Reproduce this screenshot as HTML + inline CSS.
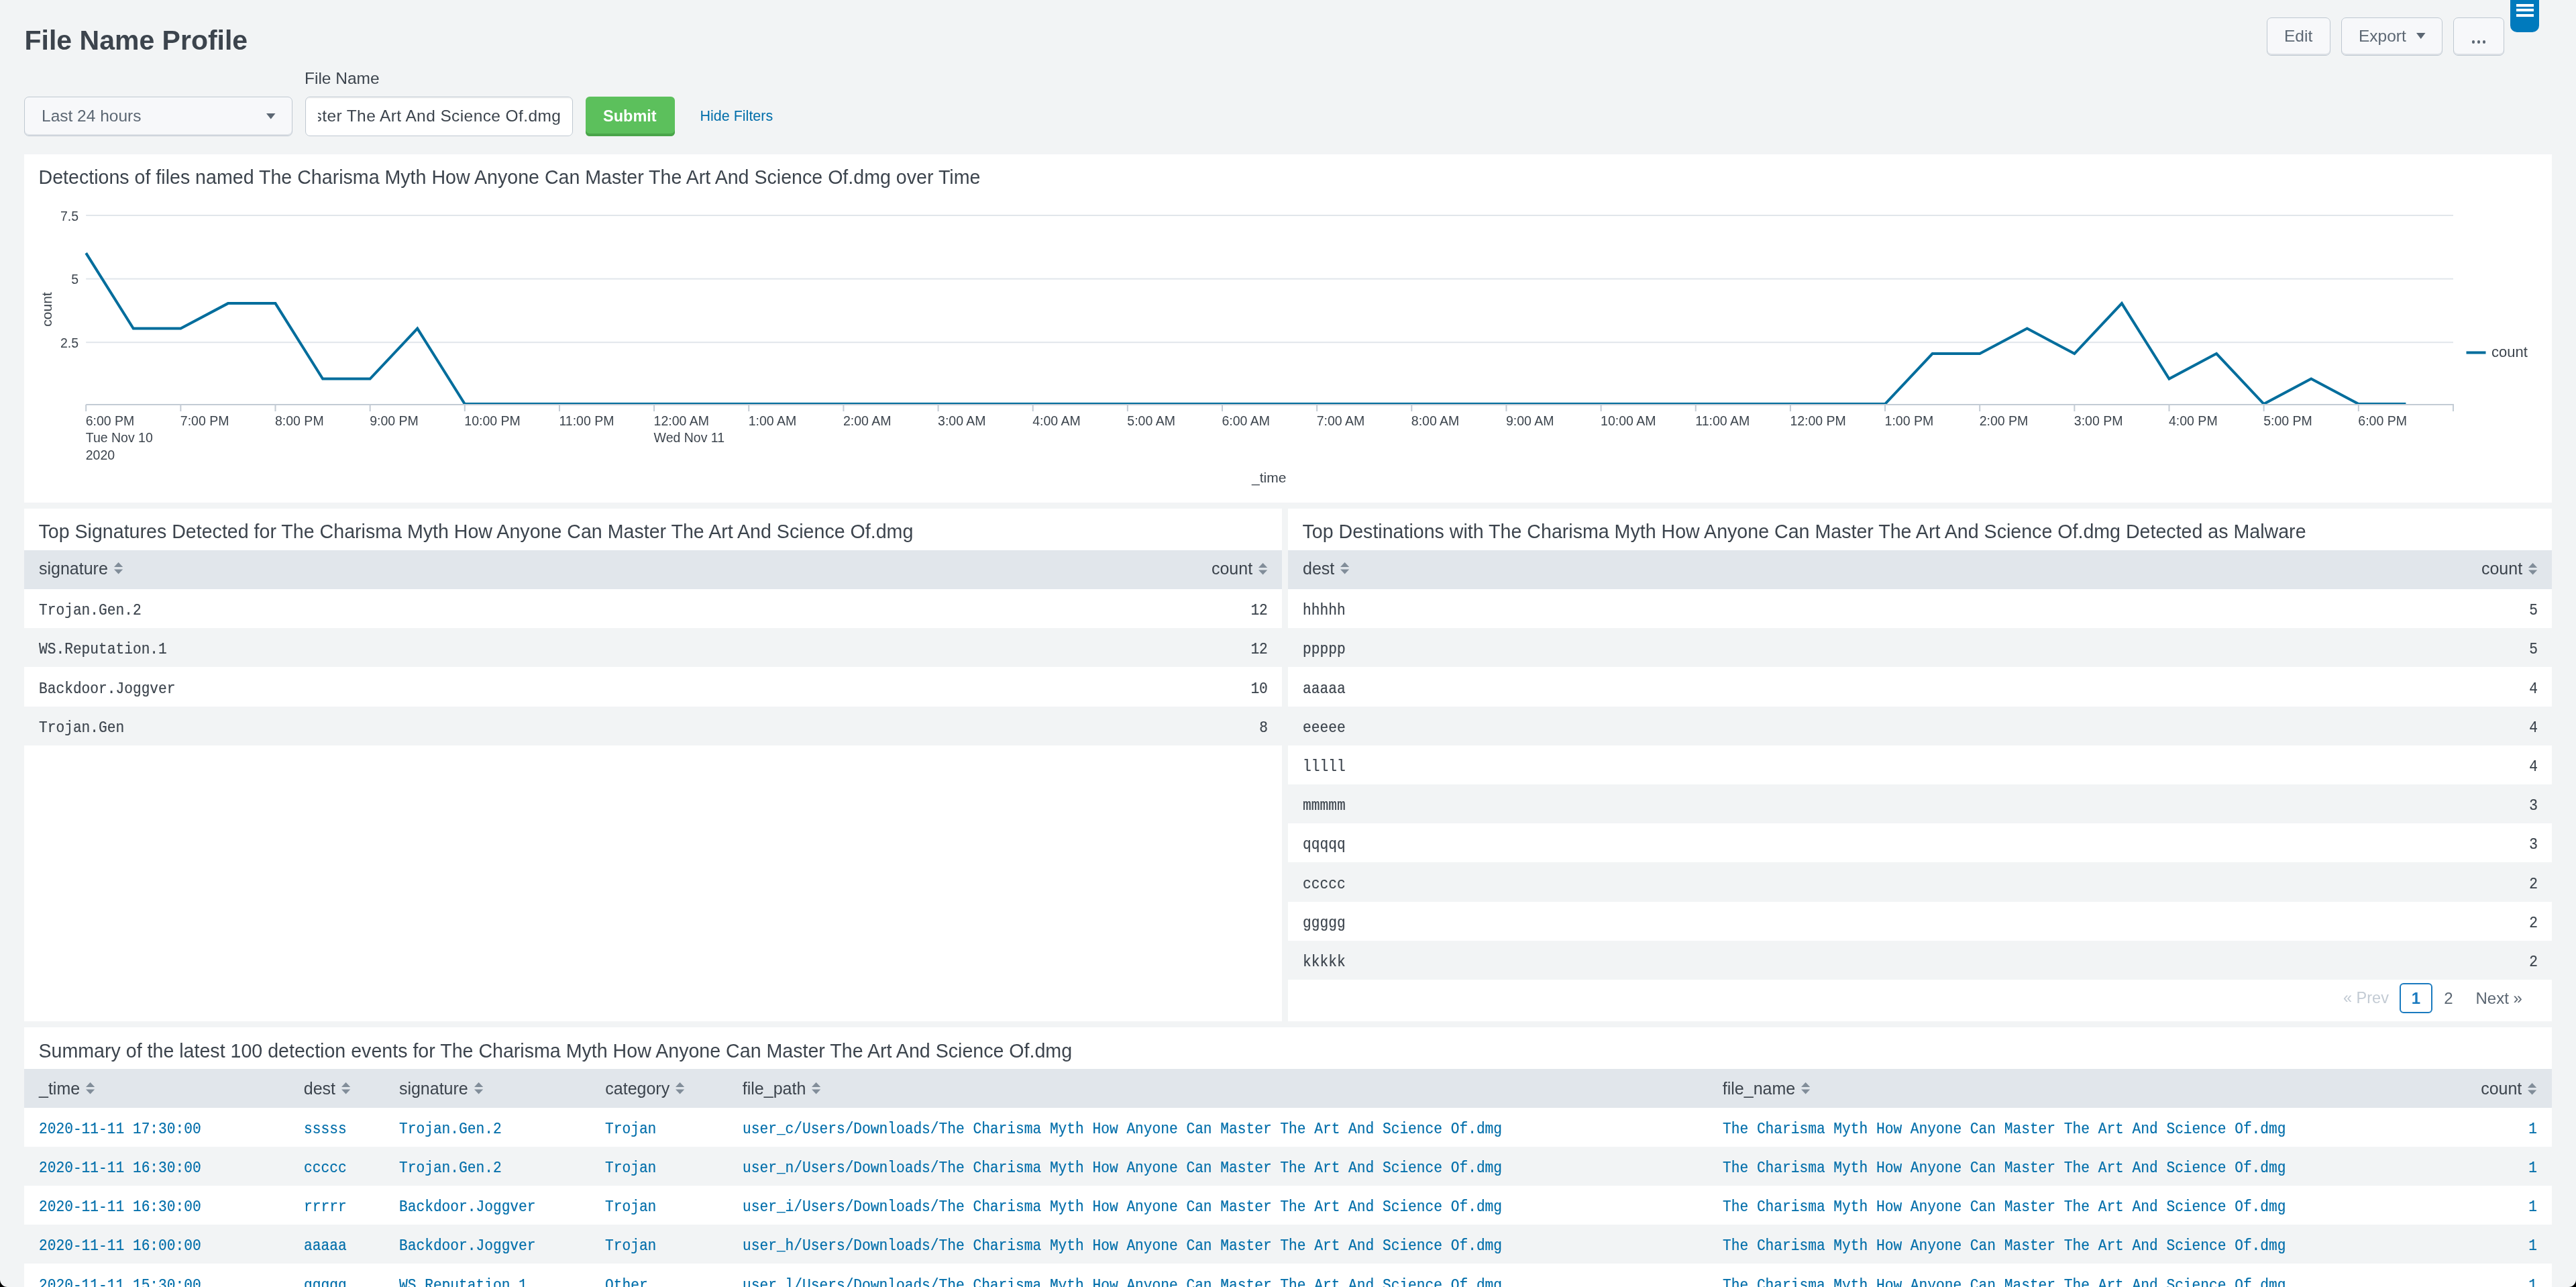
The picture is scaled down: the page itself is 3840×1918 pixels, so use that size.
<!DOCTYPE html><html><head><meta charset="utf-8"><title>File Name Profile</title><style>
html,body{margin:0;padding:0;}
body{width:3840px;height:1918px;overflow:hidden;position:relative;background:#f2f4f5;font-family:"Liberation Sans",sans-serif;}
#wrap{position:absolute;left:0;top:0;width:3840px;height:1918px;will-change:transform;}
.t{position:absolute;white-space:pre;line-height:1;}
.r{position:absolute;}
.btn{position:absolute;box-sizing:border-box;background:#f7f8fa;border:1px solid #bfc8d1;border-radius:7px;box-shadow:inset 0 -2px 0 #dde1e6;}
.dd{position:absolute;box-sizing:border-box;background:#f7f8fa;border:1px solid #bfc8d1;border-radius:7px;box-shadow:inset 0 -2px 0 #dde1e6;}
.inp{position:absolute;box-sizing:border-box;background:#ffffff;border:1px solid #bfc8d1;border-radius:7px;box-shadow:inset 0 2px 1px rgba(0,0,0,0.04);}
</style></head><body><div id="wrap"><div class="t" style="left:36.50px;top:40.49px;font-size:41px;color:#3c444d;font-weight:700;font-family:'Liberation Sans', sans-serif;">File Name Profile</div>
<div class="btn" style="left:3379px;top:26px;width:95px;height:56.5px"></div>
<div class="t" style="left:3405.00px;top:41.86px;font-size:24.5px;color:#5c6773;font-weight:400;font-family:'Liberation Sans', sans-serif;">Edit</div>
<div class="btn" style="left:3490px;top:26px;width:151px;height:56.5px"></div>
<div class="t" style="left:3516.00px;top:41.86px;font-size:24.5px;color:#5c6773;font-weight:400;font-family:'Liberation Sans', sans-serif;">Export</div>
<svg class="r" style="left:3602px;top:49px" width="14" height="10" viewBox="0 0 14 10"><path d="M0 0 L13.5 0 L6.75 9 Z" fill="#5c6773"/></svg>
<div class="btn" style="left:3657px;top:26px;width:76px;height:56.5px"></div>
<div class="r" style="left:3684.8px;top:60.199999999999996px;width:4.4px;height:4.4px;border-radius:50%;background:#5c6773"></div>
<div class="r" style="left:3692.8px;top:60.199999999999996px;width:4.4px;height:4.4px;border-radius:50%;background:#5c6773"></div>
<div class="r" style="left:3700.8px;top:60.199999999999996px;width:4.4px;height:4.4px;border-radius:50%;background:#5c6773"></div>
<div class="r" style="left:3742px;top:-10px;width:43px;height:58px;background:#007abd;border-radius:0 0 10px 10px"></div>
<div class="r" style="left:3750.70px;top:6.10px;width:26.50px;height:3.80px;background:#ffffff;"></div>
<div class="r" style="left:3750.70px;top:13.30px;width:26.50px;height:3.80px;background:#ffffff;"></div>
<div class="r" style="left:3750.70px;top:21.00px;width:26.50px;height:3.80px;background:#ffffff;"></div>
<div class="t" style="left:454.00px;top:104.56px;font-size:24.5px;color:#3c444d;font-weight:400;font-family:'Liberation Sans', sans-serif;">File Name</div>
<div class="dd" style="left:36.3px;top:144.3px;width:400.2px;height:58.5px"></div>
<div class="t" style="left:62.00px;top:161.06px;font-size:24.5px;color:#5c6773;font-weight:400;font-family:'Liberation Sans', sans-serif;">Last 24 hours</div>
<svg class="r" style="left:396.5px;top:169px" width="14" height="9" viewBox="0 0 14 9"><path d="M0 0 L13.5 0 L6.75 8.5 Z" fill="#5c6773"/></svg>
<div class="inp" style="left:455.2px;top:144.3px;width:399.3px;height:58.3px"></div>
<div class="r" style="left:473.9px;top:150px;width:362px;height:46px;overflow:hidden"><div class="t" style="right:-0.4px;letter-spacing:0.4px;top:10.66px;font-size:24.5px;color:#3c444d;font-family:'Liberation Sans', sans-serif">The Charisma Myth How Anyone Can Master The Art And Science Of.dmg</div></div>
<div class="r" style="left:873.2px;top:144px;width:133.3px;height:58.6px;background:#5cc05c;border-radius:6px;box-shadow:inset 0 -4px 0 #4aa54a"></div>
<div class="t" style="left:899.00px;top:161.51px;font-size:23.5px;color:#ffffff;font-weight:700;font-family:'Liberation Sans', sans-serif;">Submit</div>
<div class="t" style="left:1043.50px;top:162.60px;font-size:21.5px;color:#006eaa;font-weight:400;font-family:'Liberation Sans', sans-serif;">Hide Filters</div>
<div class="r" style="left:36.00px;top:230.00px;width:3768.00px;height:518.60px;background:#ffffff;"></div>
<div class="t" style="left:57.50px;top:250.29px;font-size:28.6px;color:#3c444d;font-weight:400;font-family:'Liberation Sans', sans-serif;">Detections of files named The Charisma Myth How Anyone Can Master The Art And Science Of.dmg over Time</div>
<svg class="r" style="left:0;top:0" width="3840" height="760" viewBox="0 0 3840 760"><defs><clipPath id="pc"><rect x="128" y="200" width="3530" height="402.2"/></clipPath></defs><rect x="128.2" y="320.00" width="3528.80" height="2" fill="#e1e6eb"/><rect x="128.2" y="414.60" width="3528.80" height="2" fill="#e1e6eb"/><rect x="128.2" y="509.20" width="3528.80" height="2" fill="#e1e6eb"/><polyline points="128.20,377.18 198.77,489.59 269.35,489.59 339.93,452.12 410.50,452.12 481.07,564.53 551.65,564.53 622.23,489.59 692.80,602.00 763.38,602.00 833.95,602.00 904.53,602.00 975.10,602.00 1045.67,602.00 1116.25,602.00 1186.83,602.00 1257.40,602.00 1327.98,602.00 1398.55,602.00 1469.12,602.00 1539.70,602.00 1610.28,602.00 1680.85,602.00 1751.43,602.00 1822.00,602.00 1892.58,602.00 1963.15,602.00 2033.73,602.00 2104.30,602.00 2174.88,602.00 2245.45,602.00 2316.03,602.00 2386.60,602.00 2457.17,602.00 2527.75,602.00 2598.32,602.00 2668.90,602.00 2739.47,602.00 2810.05,602.00 2880.62,527.06 2951.20,527.06 3021.78,489.59 3092.35,527.06 3162.92,452.12 3233.50,564.53 3304.07,527.06 3374.65,602.00 3445.22,564.53 3515.80,602.00 3586.38,602.00" fill="none" stroke="#006d9c" stroke-width="4" stroke-linejoin="miter"/><rect x="128.2" y="602" width="3529.80" height="2" fill="#c3cbd4"/><rect x="127.20" y="603" width="2" height="10" fill="#c3cbd4"/><rect x="268.35" y="603" width="2" height="10" fill="#c3cbd4"/><rect x="409.50" y="603" width="2" height="10" fill="#c3cbd4"/><rect x="550.65" y="603" width="2" height="10" fill="#c3cbd4"/><rect x="691.80" y="603" width="2" height="10" fill="#c3cbd4"/><rect x="832.95" y="603" width="2" height="10" fill="#c3cbd4"/><rect x="974.10" y="603" width="2" height="10" fill="#c3cbd4"/><rect x="1115.25" y="603" width="2" height="10" fill="#c3cbd4"/><rect x="1256.40" y="603" width="2" height="10" fill="#c3cbd4"/><rect x="1397.55" y="603" width="2" height="10" fill="#c3cbd4"/><rect x="1538.70" y="603" width="2" height="10" fill="#c3cbd4"/><rect x="1679.85" y="603" width="2" height="10" fill="#c3cbd4"/><rect x="1821.00" y="603" width="2" height="10" fill="#c3cbd4"/><rect x="1962.15" y="603" width="2" height="10" fill="#c3cbd4"/><rect x="2103.30" y="603" width="2" height="10" fill="#c3cbd4"/><rect x="2244.45" y="603" width="2" height="10" fill="#c3cbd4"/><rect x="2385.60" y="603" width="2" height="10" fill="#c3cbd4"/><rect x="2526.75" y="603" width="2" height="10" fill="#c3cbd4"/><rect x="2667.90" y="603" width="2" height="10" fill="#c3cbd4"/><rect x="2809.05" y="603" width="2" height="10" fill="#c3cbd4"/><rect x="2950.20" y="603" width="2" height="10" fill="#c3cbd4"/><rect x="3091.35" y="603" width="2" height="10" fill="#c3cbd4"/><rect x="3232.50" y="603" width="2" height="10" fill="#c3cbd4"/><rect x="3373.65" y="603" width="2" height="10" fill="#c3cbd4"/><rect x="3514.80" y="603" width="2" height="10" fill="#c3cbd4"/><rect x="3655.95" y="603" width="2" height="10" fill="#c3cbd4"/><rect x="3676.5" y="523.5" width="29" height="4" fill="#006d9c"/></svg>
<div class="t" style="right:3723.00px;top:312.89px;font-size:19.5px;color:#3c444d;font-weight:400;font-family:'Liberation Sans', sans-serif;">7.5</div>
<div class="t" style="right:3723.00px;top:407.49px;font-size:19.5px;color:#3c444d;font-weight:400;font-family:'Liberation Sans', sans-serif;">5</div>
<div class="t" style="right:3723.00px;top:502.09px;font-size:19.5px;color:#3c444d;font-weight:400;font-family:'Liberation Sans', sans-serif;">2.5</div>
<div class="t" style="left:68.5px;top:461px;font-size:21px;color:#3c444d;font-family:&quot;Liberation Sans&quot;,sans-serif;transform:translate(-50%,-50%) rotate(-90deg)">count</div>
<div class="t" style="left:127.70px;top:618.49px;font-size:19.5px;color:#3c444d;font-weight:400;font-family:'Liberation Sans', sans-serif;">6:00 PM</div>
<div class="t" style="left:268.85px;top:618.49px;font-size:19.5px;color:#3c444d;font-weight:400;font-family:'Liberation Sans', sans-serif;">7:00 PM</div>
<div class="t" style="left:410.00px;top:618.49px;font-size:19.5px;color:#3c444d;font-weight:400;font-family:'Liberation Sans', sans-serif;">8:00 PM</div>
<div class="t" style="left:551.15px;top:618.49px;font-size:19.5px;color:#3c444d;font-weight:400;font-family:'Liberation Sans', sans-serif;">9:00 PM</div>
<div class="t" style="left:692.30px;top:618.49px;font-size:19.5px;color:#3c444d;font-weight:400;font-family:'Liberation Sans', sans-serif;">10:00 PM</div>
<div class="t" style="left:833.45px;top:618.49px;font-size:19.5px;color:#3c444d;font-weight:400;font-family:'Liberation Sans', sans-serif;">11:00 PM</div>
<div class="t" style="left:974.60px;top:618.49px;font-size:19.5px;color:#3c444d;font-weight:400;font-family:'Liberation Sans', sans-serif;">12:00 AM</div>
<div class="t" style="left:1115.75px;top:618.49px;font-size:19.5px;color:#3c444d;font-weight:400;font-family:'Liberation Sans', sans-serif;">1:00 AM</div>
<div class="t" style="left:1256.90px;top:618.49px;font-size:19.5px;color:#3c444d;font-weight:400;font-family:'Liberation Sans', sans-serif;">2:00 AM</div>
<div class="t" style="left:1398.05px;top:618.49px;font-size:19.5px;color:#3c444d;font-weight:400;font-family:'Liberation Sans', sans-serif;">3:00 AM</div>
<div class="t" style="left:1539.20px;top:618.49px;font-size:19.5px;color:#3c444d;font-weight:400;font-family:'Liberation Sans', sans-serif;">4:00 AM</div>
<div class="t" style="left:1680.35px;top:618.49px;font-size:19.5px;color:#3c444d;font-weight:400;font-family:'Liberation Sans', sans-serif;">5:00 AM</div>
<div class="t" style="left:1821.50px;top:618.49px;font-size:19.5px;color:#3c444d;font-weight:400;font-family:'Liberation Sans', sans-serif;">6:00 AM</div>
<div class="t" style="left:1962.65px;top:618.49px;font-size:19.5px;color:#3c444d;font-weight:400;font-family:'Liberation Sans', sans-serif;">7:00 AM</div>
<div class="t" style="left:2103.80px;top:618.49px;font-size:19.5px;color:#3c444d;font-weight:400;font-family:'Liberation Sans', sans-serif;">8:00 AM</div>
<div class="t" style="left:2244.95px;top:618.49px;font-size:19.5px;color:#3c444d;font-weight:400;font-family:'Liberation Sans', sans-serif;">9:00 AM</div>
<div class="t" style="left:2386.10px;top:618.49px;font-size:19.5px;color:#3c444d;font-weight:400;font-family:'Liberation Sans', sans-serif;">10:00 AM</div>
<div class="t" style="left:2527.25px;top:618.49px;font-size:19.5px;color:#3c444d;font-weight:400;font-family:'Liberation Sans', sans-serif;">11:00 AM</div>
<div class="t" style="left:2668.40px;top:618.49px;font-size:19.5px;color:#3c444d;font-weight:400;font-family:'Liberation Sans', sans-serif;">12:00 PM</div>
<div class="t" style="left:2809.55px;top:618.49px;font-size:19.5px;color:#3c444d;font-weight:400;font-family:'Liberation Sans', sans-serif;">1:00 PM</div>
<div class="t" style="left:2950.70px;top:618.49px;font-size:19.5px;color:#3c444d;font-weight:400;font-family:'Liberation Sans', sans-serif;">2:00 PM</div>
<div class="t" style="left:3091.85px;top:618.49px;font-size:19.5px;color:#3c444d;font-weight:400;font-family:'Liberation Sans', sans-serif;">3:00 PM</div>
<div class="t" style="left:3233.00px;top:618.49px;font-size:19.5px;color:#3c444d;font-weight:400;font-family:'Liberation Sans', sans-serif;">4:00 PM</div>
<div class="t" style="left:3374.15px;top:618.49px;font-size:19.5px;color:#3c444d;font-weight:400;font-family:'Liberation Sans', sans-serif;">5:00 PM</div>
<div class="t" style="left:3515.30px;top:618.49px;font-size:19.5px;color:#3c444d;font-weight:400;font-family:'Liberation Sans', sans-serif;">6:00 PM</div>
<div class="t" style="left:127.70px;top:643.49px;font-size:19.5px;color:#3c444d;font-weight:400;font-family:'Liberation Sans', sans-serif;">Tue Nov 10</div>
<div class="t" style="left:127.70px;top:668.99px;font-size:19.5px;color:#3c444d;font-weight:400;font-family:'Liberation Sans', sans-serif;">2020</div>
<div class="t" style="left:974.60px;top:643.49px;font-size:19.5px;color:#3c444d;font-weight:400;font-family:'Liberation Sans', sans-serif;">Wed Nov 11</div>
<div class="t" style="left:1866.00px;top:701.02px;font-size:21px;color:#3c444d;font-weight:400;font-family:'Liberation Sans', sans-serif;">_time</div>
<div class="t" style="left:3714.00px;top:514.38px;font-size:22px;color:#3c444d;font-weight:400;font-family:'Liberation Sans', sans-serif;">count</div>
<div class="r" style="left:36.00px;top:758.00px;width:1875.10px;height:763.80px;background:#ffffff;"></div>
<div class="t" style="left:57.50px;top:777.99px;font-size:28.6px;color:#3c444d;font-weight:400;font-family:'Liberation Sans', sans-serif;">Top Signatures Detected for The Charisma Myth How Anyone Can Master The Art And Science Of.dmg</div>
<div class="r" style="left:36.00px;top:820.20px;width:1875.10px;height:57.80px;background:#e1e6eb;"></div>
<div class="t" style="left:58.00px;top:835.04px;font-size:25px;color:#3c444d;font-family:'Liberation Sans', sans-serif">signature<svg style="margin-left:9px;vertical-align:0" width="14" height="18" viewBox="0 0 14 18"><path d="M0 7.1 L6.6 0 L13.2 7.1 Z M0 10.6 L13.2 10.6 L6.6 17.4 Z" fill="#818d99"/></svg></div>
<div class="t" style="right:1972.90px;top:835.04px;font-size:25px;color:#3c444d;font-weight:400;font-family:'Liberation Sans', sans-serif;">count</div>
<svg class="r" style="left:1876.10px;top:838.90px" width="14" height="18" viewBox="0 0 14 18"><path d="M0 7.1 L6.6 0 L13.2 7.1 Z M0 10.6 L13.2 10.6 L6.6 17.4 Z" fill="#818d99"/></svg>
<div class="t" style="left:58.00px;top:899.22px;font-size:23.19px;color:#3c444d;font-weight:400;font-family:'Liberation Mono', monospace;transform:scaleX(0.9141);transform-origin:left center;-webkit-text-stroke:0.2px currentColor;">Trojan.Gen.2</div>
<div class="t" style="right:1950.50px;top:899.22px;font-size:23.19px;color:#3c444d;font-weight:400;font-family:'Liberation Mono', monospace;transform:scaleX(0.9141);transform-origin:right center;-webkit-text-stroke:0.2px currentColor;">12</div>
<div class="r" style="left:36.00px;top:936.20px;width:1875.10px;height:58.20px;background:#f2f4f5;"></div>
<div class="t" style="left:58.00px;top:957.42px;font-size:23.19px;color:#3c444d;font-weight:400;font-family:'Liberation Mono', monospace;transform:scaleX(0.9141);transform-origin:left center;-webkit-text-stroke:0.2px currentColor;">WS.Reputation.1</div>
<div class="t" style="right:1950.50px;top:957.42px;font-size:23.19px;color:#3c444d;font-weight:400;font-family:'Liberation Mono', monospace;transform:scaleX(0.9141);transform-origin:right center;-webkit-text-stroke:0.2px currentColor;">12</div>
<div class="t" style="left:58.00px;top:1015.62px;font-size:23.19px;color:#3c444d;font-weight:400;font-family:'Liberation Mono', monospace;transform:scaleX(0.9141);transform-origin:left center;-webkit-text-stroke:0.2px currentColor;">Backdoor.Joggver</div>
<div class="t" style="right:1950.50px;top:1015.62px;font-size:23.19px;color:#3c444d;font-weight:400;font-family:'Liberation Mono', monospace;transform:scaleX(0.9141);transform-origin:right center;-webkit-text-stroke:0.2px currentColor;">10</div>
<div class="r" style="left:36.00px;top:1052.60px;width:1875.10px;height:58.20px;background:#f2f4f5;"></div>
<div class="t" style="left:58.00px;top:1073.82px;font-size:23.19px;color:#3c444d;font-weight:400;font-family:'Liberation Mono', monospace;transform:scaleX(0.9141);transform-origin:left center;-webkit-text-stroke:0.2px currentColor;">Trojan.Gen</div>
<div class="t" style="right:1950.50px;top:1073.82px;font-size:23.19px;color:#3c444d;font-weight:400;font-family:'Liberation Mono', monospace;transform:scaleX(0.9141);transform-origin:right center;-webkit-text-stroke:0.2px currentColor;">8</div>
<div class="r" style="left:1920.20px;top:758.00px;width:1883.80px;height:763.80px;background:#ffffff;"></div>
<div class="t" style="left:1941.50px;top:777.99px;font-size:28.6px;color:#3c444d;font-weight:400;font-family:'Liberation Sans', sans-serif;">Top Destinations with The Charisma Myth How Anyone Can Master The Art And Science Of.dmg Detected as Malware</div>
<div class="r" style="left:1920.20px;top:820.20px;width:1883.80px;height:57.80px;background:#e1e6eb;"></div>
<div class="t" style="left:1942.00px;top:835.04px;font-size:25px;color:#3c444d;font-family:'Liberation Sans', sans-serif">dest<svg style="margin-left:9px;vertical-align:0" width="14" height="18" viewBox="0 0 14 18"><path d="M0 7.1 L6.6 0 L13.2 7.1 Z M0 10.6 L13.2 10.6 L6.6 17.4 Z" fill="#818d99"/></svg></div>
<div class="t" style="right:79.90px;top:835.04px;font-size:25px;color:#3c444d;font-weight:400;font-family:'Liberation Sans', sans-serif;">count</div>
<svg class="r" style="left:3769.10px;top:838.90px" width="14" height="18" viewBox="0 0 14 18"><path d="M0 7.1 L6.6 0 L13.2 7.1 Z M0 10.6 L13.2 10.6 L6.6 17.4 Z" fill="#818d99"/></svg>
<div class="t" style="left:1942.00px;top:899.22px;font-size:23.19px;color:#3c444d;font-weight:400;font-family:'Liberation Mono', monospace;transform:scaleX(0.9141);transform-origin:left center;-webkit-text-stroke:0.2px currentColor;">hhhhh</div>
<div class="t" style="right:57.50px;top:899.22px;font-size:23.19px;color:#3c444d;font-weight:400;font-family:'Liberation Mono', monospace;transform:scaleX(0.9141);transform-origin:right center;-webkit-text-stroke:0.2px currentColor;">5</div>
<div class="r" style="left:1920.20px;top:936.20px;width:1883.80px;height:58.20px;background:#f2f4f5;"></div>
<div class="t" style="left:1942.00px;top:957.42px;font-size:23.19px;color:#3c444d;font-weight:400;font-family:'Liberation Mono', monospace;transform:scaleX(0.9141);transform-origin:left center;-webkit-text-stroke:0.2px currentColor;">ppppp</div>
<div class="t" style="right:57.50px;top:957.42px;font-size:23.19px;color:#3c444d;font-weight:400;font-family:'Liberation Mono', monospace;transform:scaleX(0.9141);transform-origin:right center;-webkit-text-stroke:0.2px currentColor;">5</div>
<div class="t" style="left:1942.00px;top:1015.62px;font-size:23.19px;color:#3c444d;font-weight:400;font-family:'Liberation Mono', monospace;transform:scaleX(0.9141);transform-origin:left center;-webkit-text-stroke:0.2px currentColor;">aaaaa</div>
<div class="t" style="right:57.50px;top:1015.62px;font-size:23.19px;color:#3c444d;font-weight:400;font-family:'Liberation Mono', monospace;transform:scaleX(0.9141);transform-origin:right center;-webkit-text-stroke:0.2px currentColor;">4</div>
<div class="r" style="left:1920.20px;top:1052.60px;width:1883.80px;height:58.20px;background:#f2f4f5;"></div>
<div class="t" style="left:1942.00px;top:1073.82px;font-size:23.19px;color:#3c444d;font-weight:400;font-family:'Liberation Mono', monospace;transform:scaleX(0.9141);transform-origin:left center;-webkit-text-stroke:0.2px currentColor;">eeeee</div>
<div class="t" style="right:57.50px;top:1073.82px;font-size:23.19px;color:#3c444d;font-weight:400;font-family:'Liberation Mono', monospace;transform:scaleX(0.9141);transform-origin:right center;-webkit-text-stroke:0.2px currentColor;">4</div>
<div class="t" style="left:1942.00px;top:1132.02px;font-size:23.19px;color:#3c444d;font-weight:400;font-family:'Liberation Mono', monospace;transform:scaleX(0.9141);transform-origin:left center;-webkit-text-stroke:0.2px currentColor;">lllll</div>
<div class="t" style="right:57.50px;top:1132.02px;font-size:23.19px;color:#3c444d;font-weight:400;font-family:'Liberation Mono', monospace;transform:scaleX(0.9141);transform-origin:right center;-webkit-text-stroke:0.2px currentColor;">4</div>
<div class="r" style="left:1920.20px;top:1169.00px;width:1883.80px;height:58.20px;background:#f2f4f5;"></div>
<div class="t" style="left:1942.00px;top:1190.22px;font-size:23.19px;color:#3c444d;font-weight:400;font-family:'Liberation Mono', monospace;transform:scaleX(0.9141);transform-origin:left center;-webkit-text-stroke:0.2px currentColor;">mmmmm</div>
<div class="t" style="right:57.50px;top:1190.22px;font-size:23.19px;color:#3c444d;font-weight:400;font-family:'Liberation Mono', monospace;transform:scaleX(0.9141);transform-origin:right center;-webkit-text-stroke:0.2px currentColor;">3</div>
<div class="t" style="left:1942.00px;top:1248.42px;font-size:23.19px;color:#3c444d;font-weight:400;font-family:'Liberation Mono', monospace;transform:scaleX(0.9141);transform-origin:left center;-webkit-text-stroke:0.2px currentColor;">qqqqq</div>
<div class="t" style="right:57.50px;top:1248.42px;font-size:23.19px;color:#3c444d;font-weight:400;font-family:'Liberation Mono', monospace;transform:scaleX(0.9141);transform-origin:right center;-webkit-text-stroke:0.2px currentColor;">3</div>
<div class="r" style="left:1920.20px;top:1285.40px;width:1883.80px;height:58.20px;background:#f2f4f5;"></div>
<div class="t" style="left:1942.00px;top:1306.62px;font-size:23.19px;color:#3c444d;font-weight:400;font-family:'Liberation Mono', monospace;transform:scaleX(0.9141);transform-origin:left center;-webkit-text-stroke:0.2px currentColor;">ccccc</div>
<div class="t" style="right:57.50px;top:1306.62px;font-size:23.19px;color:#3c444d;font-weight:400;font-family:'Liberation Mono', monospace;transform:scaleX(0.9141);transform-origin:right center;-webkit-text-stroke:0.2px currentColor;">2</div>
<div class="t" style="left:1942.00px;top:1364.82px;font-size:23.19px;color:#3c444d;font-weight:400;font-family:'Liberation Mono', monospace;transform:scaleX(0.9141);transform-origin:left center;-webkit-text-stroke:0.2px currentColor;">ggggg</div>
<div class="t" style="right:57.50px;top:1364.82px;font-size:23.19px;color:#3c444d;font-weight:400;font-family:'Liberation Mono', monospace;transform:scaleX(0.9141);transform-origin:right center;-webkit-text-stroke:0.2px currentColor;">2</div>
<div class="r" style="left:1920.20px;top:1401.80px;width:1883.80px;height:58.20px;background:#f2f4f5;"></div>
<div class="t" style="left:1942.00px;top:1423.02px;font-size:23.19px;color:#3c444d;font-weight:400;font-family:'Liberation Mono', monospace;transform:scaleX(0.9141);transform-origin:left center;-webkit-text-stroke:0.2px currentColor;">kkkkk</div>
<div class="t" style="right:57.50px;top:1423.02px;font-size:23.19px;color:#3c444d;font-weight:400;font-family:'Liberation Mono', monospace;transform:scaleX(0.9141);transform-origin:right center;-webkit-text-stroke:0.2px currentColor;">2</div>
<div class="t" style="left:3493.00px;top:1476.11px;font-size:23.5px;color:#c3cbd4;font-weight:400;font-family:'Liberation Sans', sans-serif;">« Prev</div>
<div class="r" style="left:3577.2px;top:1465.3px;width:48.5px;height:45.2px;border:2px solid #1a7abf;border-radius:6px;box-sizing:border-box"></div>
<div class="t" style="left:3601.50px;transform:translateX(-50%);top:1475.68px;font-size:24px;color:#1a7abf;font-weight:700;font-family:'Liberation Sans', sans-serif;">1</div>
<div class="t" style="left:3650.00px;transform:translateX(-50%);top:1475.68px;font-size:24px;color:#5c6773;font-weight:400;font-family:'Liberation Sans', sans-serif;">2</div>
<div class="t" style="left:3690.50px;top:1475.68px;font-size:24px;color:#5c6773;font-weight:400;font-family:'Liberation Sans', sans-serif;">Next »</div>
<div class="r" style="left:36.00px;top:1531.00px;width:3768.00px;height:400.00px;background:#ffffff;"></div>
<div class="t" style="left:57.50px;top:1552.39px;font-size:28.6px;color:#3c444d;font-weight:400;font-family:'Liberation Sans', sans-serif;">Summary of the latest 100 detection events for The Charisma Myth How Anyone Can Master The Art And Science Of.dmg</div>
<div class="r" style="left:36.00px;top:1593.20px;width:3768.00px;height:57.40px;background:#e1e6eb;"></div>
<div class="t" style="left:58.00px;top:1609.84px;font-size:25px;color:#3c444d;font-family:'Liberation Sans', sans-serif">_time<svg style="margin-left:9px;vertical-align:0" width="14" height="18" viewBox="0 0 14 18"><path d="M0 7.1 L6.6 0 L13.2 7.1 Z M0 10.6 L13.2 10.6 L6.6 17.4 Z" fill="#818d99"/></svg></div>
<div class="t" style="left:452.80px;top:1609.84px;font-size:25px;color:#3c444d;font-family:'Liberation Sans', sans-serif">dest<svg style="margin-left:9px;vertical-align:0" width="14" height="18" viewBox="0 0 14 18"><path d="M0 7.1 L6.6 0 L13.2 7.1 Z M0 10.6 L13.2 10.6 L6.6 17.4 Z" fill="#818d99"/></svg></div>
<div class="t" style="left:594.90px;top:1609.84px;font-size:25px;color:#3c444d;font-family:'Liberation Sans', sans-serif">signature<svg style="margin-left:9px;vertical-align:0" width="14" height="18" viewBox="0 0 14 18"><path d="M0 7.1 L6.6 0 L13.2 7.1 Z M0 10.6 L13.2 10.6 L6.6 17.4 Z" fill="#818d99"/></svg></div>
<div class="t" style="left:902.30px;top:1609.84px;font-size:25px;color:#3c444d;font-family:'Liberation Sans', sans-serif">category<svg style="margin-left:9px;vertical-align:0" width="14" height="18" viewBox="0 0 14 18"><path d="M0 7.1 L6.6 0 L13.2 7.1 Z M0 10.6 L13.2 10.6 L6.6 17.4 Z" fill="#818d99"/></svg></div>
<div class="t" style="left:1106.80px;top:1609.84px;font-size:25px;color:#3c444d;font-family:'Liberation Sans', sans-serif">file_path<svg style="margin-left:9px;vertical-align:0" width="14" height="18" viewBox="0 0 14 18"><path d="M0 7.1 L6.6 0 L13.2 7.1 Z M0 10.6 L13.2 10.6 L6.6 17.4 Z" fill="#818d99"/></svg></div>
<div class="t" style="left:2567.80px;top:1609.84px;font-size:25px;color:#3c444d;font-family:'Liberation Sans', sans-serif">file_name<svg style="margin-left:9px;vertical-align:0" width="14" height="18" viewBox="0 0 14 18"><path d="M0 7.1 L6.6 0 L13.2 7.1 Z M0 10.6 L13.2 10.6 L6.6 17.4 Z" fill="#818d99"/></svg></div>
<div class="t" style="right:80.70px;top:1609.84px;font-size:25px;color:#3c444d;font-weight:400;font-family:'Liberation Sans', sans-serif;">count</div>
<svg class="r" style="left:3768.30px;top:1613.70px" width="14" height="18" viewBox="0 0 14 18"><path d="M0 7.1 L6.6 0 L13.2 7.1 Z M0 10.6 L13.2 10.6 L6.6 17.4 Z" fill="#818d99"/></svg>
<div class="t" style="left:58.00px;top:1671.82px;font-size:23.19px;color:#006eaa;font-weight:400;font-family:'Liberation Mono', monospace;transform:scaleX(0.9141);transform-origin:left center;-webkit-text-stroke:0.2px currentColor;">2020-11-11 17:30:00</div>
<div class="t" style="left:452.80px;top:1671.82px;font-size:23.19px;color:#006eaa;font-weight:400;font-family:'Liberation Mono', monospace;transform:scaleX(0.9141);transform-origin:left center;-webkit-text-stroke:0.2px currentColor;">sssss</div>
<div class="t" style="left:594.90px;top:1671.82px;font-size:23.19px;color:#006eaa;font-weight:400;font-family:'Liberation Mono', monospace;transform:scaleX(0.9141);transform-origin:left center;-webkit-text-stroke:0.2px currentColor;">Trojan.Gen.2</div>
<div class="t" style="left:902.30px;top:1671.82px;font-size:23.19px;color:#006eaa;font-weight:400;font-family:'Liberation Mono', monospace;transform:scaleX(0.9141);transform-origin:left center;-webkit-text-stroke:0.2px currentColor;">Trojan</div>
<div class="t" style="left:1106.80px;top:1671.82px;font-size:23.19px;color:#006eaa;font-weight:400;font-family:'Liberation Mono', monospace;transform:scaleX(0.9141);transform-origin:left center;-webkit-text-stroke:0.2px currentColor;">user_c/Users/Downloads/The Charisma Myth How Anyone Can Master The Art And Science Of.dmg</div>
<div class="t" style="left:2567.80px;top:1671.82px;font-size:23.19px;color:#006eaa;font-weight:400;font-family:'Liberation Mono', monospace;transform:scaleX(0.9141);transform-origin:left center;-webkit-text-stroke:0.2px currentColor;">The Charisma Myth How Anyone Can Master The Art And Science Of.dmg</div>
<div class="t" style="right:58.20px;top:1671.82px;font-size:23.19px;color:#006eaa;font-weight:400;font-family:'Liberation Mono', monospace;transform:scaleX(0.9141);transform-origin:right center;-webkit-text-stroke:0.2px currentColor;">1</div>
<div class="r" style="left:36.00px;top:1708.80px;width:3768.00px;height:58.20px;background:#f2f4f5;"></div>
<div class="t" style="left:58.00px;top:1730.02px;font-size:23.19px;color:#006eaa;font-weight:400;font-family:'Liberation Mono', monospace;transform:scaleX(0.9141);transform-origin:left center;-webkit-text-stroke:0.2px currentColor;">2020-11-11 16:30:00</div>
<div class="t" style="left:452.80px;top:1730.02px;font-size:23.19px;color:#006eaa;font-weight:400;font-family:'Liberation Mono', monospace;transform:scaleX(0.9141);transform-origin:left center;-webkit-text-stroke:0.2px currentColor;">ccccc</div>
<div class="t" style="left:594.90px;top:1730.02px;font-size:23.19px;color:#006eaa;font-weight:400;font-family:'Liberation Mono', monospace;transform:scaleX(0.9141);transform-origin:left center;-webkit-text-stroke:0.2px currentColor;">Trojan.Gen.2</div>
<div class="t" style="left:902.30px;top:1730.02px;font-size:23.19px;color:#006eaa;font-weight:400;font-family:'Liberation Mono', monospace;transform:scaleX(0.9141);transform-origin:left center;-webkit-text-stroke:0.2px currentColor;">Trojan</div>
<div class="t" style="left:1106.80px;top:1730.02px;font-size:23.19px;color:#006eaa;font-weight:400;font-family:'Liberation Mono', monospace;transform:scaleX(0.9141);transform-origin:left center;-webkit-text-stroke:0.2px currentColor;">user_n/Users/Downloads/The Charisma Myth How Anyone Can Master The Art And Science Of.dmg</div>
<div class="t" style="left:2567.80px;top:1730.02px;font-size:23.19px;color:#006eaa;font-weight:400;font-family:'Liberation Mono', monospace;transform:scaleX(0.9141);transform-origin:left center;-webkit-text-stroke:0.2px currentColor;">The Charisma Myth How Anyone Can Master The Art And Science Of.dmg</div>
<div class="t" style="right:58.20px;top:1730.02px;font-size:23.19px;color:#006eaa;font-weight:400;font-family:'Liberation Mono', monospace;transform:scaleX(0.9141);transform-origin:right center;-webkit-text-stroke:0.2px currentColor;">1</div>
<div class="t" style="left:58.00px;top:1788.22px;font-size:23.19px;color:#006eaa;font-weight:400;font-family:'Liberation Mono', monospace;transform:scaleX(0.9141);transform-origin:left center;-webkit-text-stroke:0.2px currentColor;">2020-11-11 16:30:00</div>
<div class="t" style="left:452.80px;top:1788.22px;font-size:23.19px;color:#006eaa;font-weight:400;font-family:'Liberation Mono', monospace;transform:scaleX(0.9141);transform-origin:left center;-webkit-text-stroke:0.2px currentColor;">rrrrr</div>
<div class="t" style="left:594.90px;top:1788.22px;font-size:23.19px;color:#006eaa;font-weight:400;font-family:'Liberation Mono', monospace;transform:scaleX(0.9141);transform-origin:left center;-webkit-text-stroke:0.2px currentColor;">Backdoor.Joggver</div>
<div class="t" style="left:902.30px;top:1788.22px;font-size:23.19px;color:#006eaa;font-weight:400;font-family:'Liberation Mono', monospace;transform:scaleX(0.9141);transform-origin:left center;-webkit-text-stroke:0.2px currentColor;">Trojan</div>
<div class="t" style="left:1106.80px;top:1788.22px;font-size:23.19px;color:#006eaa;font-weight:400;font-family:'Liberation Mono', monospace;transform:scaleX(0.9141);transform-origin:left center;-webkit-text-stroke:0.2px currentColor;">user_i/Users/Downloads/The Charisma Myth How Anyone Can Master The Art And Science Of.dmg</div>
<div class="t" style="left:2567.80px;top:1788.22px;font-size:23.19px;color:#006eaa;font-weight:400;font-family:'Liberation Mono', monospace;transform:scaleX(0.9141);transform-origin:left center;-webkit-text-stroke:0.2px currentColor;">The Charisma Myth How Anyone Can Master The Art And Science Of.dmg</div>
<div class="t" style="right:58.20px;top:1788.22px;font-size:23.19px;color:#006eaa;font-weight:400;font-family:'Liberation Mono', monospace;transform:scaleX(0.9141);transform-origin:right center;-webkit-text-stroke:0.2px currentColor;">1</div>
<div class="r" style="left:36.00px;top:1825.20px;width:3768.00px;height:58.20px;background:#f2f4f5;"></div>
<div class="t" style="left:58.00px;top:1846.42px;font-size:23.19px;color:#006eaa;font-weight:400;font-family:'Liberation Mono', monospace;transform:scaleX(0.9141);transform-origin:left center;-webkit-text-stroke:0.2px currentColor;">2020-11-11 16:00:00</div>
<div class="t" style="left:452.80px;top:1846.42px;font-size:23.19px;color:#006eaa;font-weight:400;font-family:'Liberation Mono', monospace;transform:scaleX(0.9141);transform-origin:left center;-webkit-text-stroke:0.2px currentColor;">aaaaa</div>
<div class="t" style="left:594.90px;top:1846.42px;font-size:23.19px;color:#006eaa;font-weight:400;font-family:'Liberation Mono', monospace;transform:scaleX(0.9141);transform-origin:left center;-webkit-text-stroke:0.2px currentColor;">Backdoor.Joggver</div>
<div class="t" style="left:902.30px;top:1846.42px;font-size:23.19px;color:#006eaa;font-weight:400;font-family:'Liberation Mono', monospace;transform:scaleX(0.9141);transform-origin:left center;-webkit-text-stroke:0.2px currentColor;">Trojan</div>
<div class="t" style="left:1106.80px;top:1846.42px;font-size:23.19px;color:#006eaa;font-weight:400;font-family:'Liberation Mono', monospace;transform:scaleX(0.9141);transform-origin:left center;-webkit-text-stroke:0.2px currentColor;">user_h/Users/Downloads/The Charisma Myth How Anyone Can Master The Art And Science Of.dmg</div>
<div class="t" style="left:2567.80px;top:1846.42px;font-size:23.19px;color:#006eaa;font-weight:400;font-family:'Liberation Mono', monospace;transform:scaleX(0.9141);transform-origin:left center;-webkit-text-stroke:0.2px currentColor;">The Charisma Myth How Anyone Can Master The Art And Science Of.dmg</div>
<div class="t" style="right:58.20px;top:1846.42px;font-size:23.19px;color:#006eaa;font-weight:400;font-family:'Liberation Mono', monospace;transform:scaleX(0.9141);transform-origin:right center;-webkit-text-stroke:0.2px currentColor;">1</div>
<div class="t" style="left:58.00px;top:1904.62px;font-size:23.19px;color:#006eaa;font-weight:400;font-family:'Liberation Mono', monospace;transform:scaleX(0.9141);transform-origin:left center;-webkit-text-stroke:0.2px currentColor;">2020-11-11 15:30:00</div>
<div class="t" style="left:452.80px;top:1904.62px;font-size:23.19px;color:#006eaa;font-weight:400;font-family:'Liberation Mono', monospace;transform:scaleX(0.9141);transform-origin:left center;-webkit-text-stroke:0.2px currentColor;">ggggg</div>
<div class="t" style="left:594.90px;top:1904.62px;font-size:23.19px;color:#006eaa;font-weight:400;font-family:'Liberation Mono', monospace;transform:scaleX(0.9141);transform-origin:left center;-webkit-text-stroke:0.2px currentColor;">WS.Reputation.1</div>
<div class="t" style="left:902.30px;top:1904.62px;font-size:23.19px;color:#006eaa;font-weight:400;font-family:'Liberation Mono', monospace;transform:scaleX(0.9141);transform-origin:left center;-webkit-text-stroke:0.2px currentColor;">Other</div>
<div class="t" style="left:1106.80px;top:1904.62px;font-size:23.19px;color:#006eaa;font-weight:400;font-family:'Liberation Mono', monospace;transform:scaleX(0.9141);transform-origin:left center;-webkit-text-stroke:0.2px currentColor;">user_l/Users/Downloads/The Charisma Myth How Anyone Can Master The Art And Science Of.dmg</div>
<div class="t" style="left:2567.80px;top:1904.62px;font-size:23.19px;color:#006eaa;font-weight:400;font-family:'Liberation Mono', monospace;transform:scaleX(0.9141);transform-origin:left center;-webkit-text-stroke:0.2px currentColor;">The Charisma Myth How Anyone Can Master The Art And Science Of.dmg</div>
<div class="t" style="right:58.20px;top:1904.62px;font-size:23.19px;color:#006eaa;font-weight:400;font-family:'Liberation Mono', monospace;transform:scaleX(0.9141);transform-origin:right center;-webkit-text-stroke:0.2px currentColor;">1</div>
<svg class="r" style="left:0;top:1898px" width="20" height="20" viewBox="0 0 20 20"><path d="M0 9 L0 20 L11 20 A11 11 0 0 1 0 9 Z" fill="#000"/></svg>
<svg class="r" style="left:3820px;top:1898px" width="20" height="20" viewBox="0 0 20 20"><path d="M20 9 L20 20 L9 20 A11 11 0 0 0 20 9 Z" fill="#000"/></svg></div></body></html>
